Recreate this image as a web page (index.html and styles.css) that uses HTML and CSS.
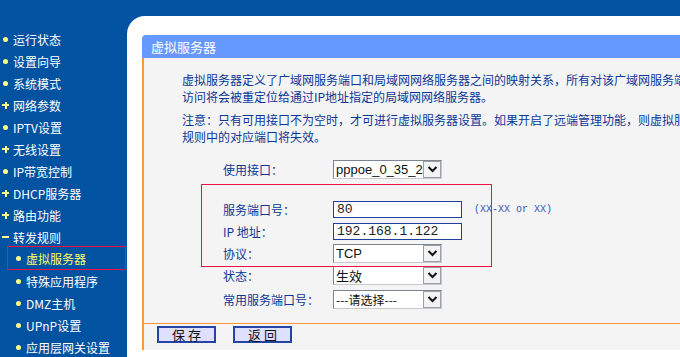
FILE: index.html
```html
<!DOCTYPE html>
<html lang="zh-CN">
<head>
    <meta charset="UTF-8">
    <title>虚拟服务器</title>
    <link rel="stylesheet" href="styles.css">
</head>
<body>
    <div class="frame">
        <nav class="menu">
            <ul>
                <li class="item dot">运行状态</li>
                <li class="item dot">设置向导</li>
                <li class="item dot">系统模式</li>
                <li class="item plus">网络参数</li>
                <li class="item dot">IPTV设置</li>
                <li class="item plus">无线设置</li>
                <li class="item dot">IP带宽控制</li>
                <li class="item plus">DHCP服务器</li>
                <li class="item plus">路由功能</li>
                <li class="item minus">转发规则</li>
                <li class="sub dot active">虚拟服务器</li>
                <li class="sub dot">特殊应用程序</li>
                <li class="sub dot">DMZ主机</li>
                <li class="sub dot">UPnP设置</li>
                <li class="sub dot">应用层网关设置</li>
            </ul>
        </nav>

        <main class="main">
            <section class="panel">
                <h2 class="panel-title">虚拟服务器</h2>
                <div class="panel-body">
                    <div class="intro">
                        <p>虚拟服务器定义了广域网服务端口和局域网网络服务器之间的映射关系，所有对该广域网服务端口的<br>访问将会被重定位给通过IP地址指定的局域网网络服务器。</p>
                        <p>注意：只有可用接口不为空时，才可进行虚拟服务器设置。如果开启了远端管理功能，则虚拟服务器<br>规则中的对应端口将失效。</p>
                    </div>

                    <div class="form">
                        <div class="row">
                            <label>使用接口：</label>
                            <div class="select">
                                <span class="value latin">pppoe_0_35_2</span>
                                <span class="arrow"><svg width="11" height="8" viewBox="0 0 11 8"><path d="M1.5 2 L5.5 6 L9.5 2" fill="none" stroke="#111" stroke-width="2"/></svg></span>
                            </div>
                        </div>
                        <div class="row gap">
                            <label>服务端口号：</label>
                            <div class="field">
                                <span class="input">80</span>
                                <span class="hint">(XX-XX or XX)</span>
                            </div>
                        </div>
                        <div class="row">
                            <label>IP 地址：</label>
                            <span class="input">192.168.1.122</span>
                        </div>
                        <div class="row">
                            <label>协议：</label>
                            <div class="select">
                                <span class="value latin">TCP</span>
                                <span class="arrow"><svg width="11" height="8" viewBox="0 0 11 8"><path d="M1.5 2 L5.5 6 L9.5 2" fill="none" stroke="#111" stroke-width="2"/></svg></span>
                            </div>
                        </div>
                        <div class="row">
                            <label>状态：</label>
                            <div class="select">
                                <span class="value">生效</span>
                                <span class="arrow"><svg width="11" height="8" viewBox="0 0 11 8"><path d="M1.5 2 L5.5 6 L9.5 2" fill="none" stroke="#111" stroke-width="2"/></svg></span>
                            </div>
                        </div>
                        <div class="row tight">
                            <label>常用服务端口号：</label>
                            <div class="select">
                                <span class="value small">---请选择---</span>
                                <span class="arrow"><svg width="11" height="8" viewBox="0 0 11 8"><path d="M1.5 2 L5.5 6 L9.5 2" fill="none" stroke="#111" stroke-width="2"/></svg></span>
                            </div>
                        </div>

                        <!-- annotation box drawn over the rows -->
                        <div class="highlight"></div>
                    </div>

                    <div class="buttons">
                        <button>保 存</button>
                        <button>返 回</button>
                    </div>
                </div>
            </section>
        </main>
    </div>
</body>
</html>
```

FILE: styles.css
```css
:root {
    --blue: #0152a1;
    --title: #6699ff;
    --panel: #f4f4f4;
    --orange: #ff9933;
    --text: #0c3797;
    --bullet: #ffff88;
}

* {
    margin: 0;
    padding: 0;
    box-sizing: border-box;
}

body {
    font-family: "Noto Sans CJK SC", "Noto Sans", sans-serif;
    font-size: 12px;
    background: var(--blue);
    overflow: hidden;
    height: 357px;
}

.frame {
    display: grid;
    grid-template-columns: 127px 1fr;
    padding-top: 16px;
    height: 357px;
}

/* left menu */

.menu {
    padding-top: 12px;
}

.menu ul {
    list-style: none;
}

.menu li {
    display: flex;
    align-items: center;
    height: 22px;
    color: #fff;
    white-space: nowrap;
}

.menu li::before {
    content: "";
    display: block;
    flex: none;
    margin-right: 4px;
}

.menu .item {
    padding-left: 2px;
}

.menu .sub {
    padding-left: 15px;
}

.menu .dot::before {
    width: 5px;
    height: 5px;
    margin-left: 1px;
    margin-right: 5px;
    border-radius: 50%;
    background: var(--bullet);
}

.menu .plus::before {
    width: 7px;
    height: 7px;
    background:
        linear-gradient(var(--bullet), var(--bullet)) center / 7px 2px no-repeat,
        linear-gradient(var(--bullet), var(--bullet)) center / 2px 7px no-repeat;
}

.menu .minus::before {
    width: 7px;
    height: 7px;
    background: linear-gradient(var(--bullet), var(--bullet)) center / 7px 2px no-repeat;
}

.menu .active {
    margin-left: 7px;
    margin-right: 1px;
    padding-left: 7px;
    height: 24px;
    margin-top: -2px;
    color: #ffff66;
    border: 1px solid #ee1144;
}

/* main panel */

.main {
    background: #fff;
    border-top-left-radius: 18px;
    padding: 19px 0 0 15px;
    overflow: hidden;
}

.panel {
    width: 720px;
}

.panel-title {
    height: 23px;
    line-height: 23px;
    padding-left: 9px;
    font-size: 13px;
    font-weight: normal;
    color: #fff;
    background: var(--title);
    border-top-left-radius: 4px;
}

.panel-body {
    height: 292px;
    background: var(--panel);
    border-left: 2px solid var(--orange);
}

.intro {
    padding: 13px 0 0 38px;
    color: var(--text);
    white-space: nowrap;
}

.intro p {
    line-height: 17px;
    margin-bottom: 6px;
}

.form {
    position: relative;
    margin-top: 13px;
    padding-left: 79px;
}

.row {
    display: grid;
    grid-template-columns: 110px auto;
    align-items: center;
    height: 22px;
}

.row.gap {
    margin-top: 18px;
}

.row.tight {
    margin-top: 2px;
}

.row label {
    color: var(--text);
}

.field {
    display: flex;
    align-items: center;
    gap: 12px;
}

.input {
    display: block;
    width: 129px;
    height: 17px;
    line-height: 15px;
    padding-left: 3px;
    border: 1px solid #1e3f9c;
    background: #fff;
    font-family: "Liberation Mono", monospace;
    font-size: 13px;
    color: #222;
}

.hint {
    font-family: "Liberation Mono", monospace;
    font-size: 10px;
    color: #3358b8;
}

.select {
    display: flex;
    width: 109px;
    height: 19px;
    border: 1px solid #7d8592;
    border-right-color: #c6c9cf;
    border-bottom-color: #c6c9cf;
    background: #fff;
}

.select .value {
    flex: 1;
    overflow: hidden;
    white-space: nowrap;
    padding-left: 2px;
    line-height: 17px;
    font-size: 13px;
    color: #111;
}

.select .value.latin {
    font-family: "Liberation Sans", sans-serif;
}

.select .value.small {
    font-size: 12px;
}

.select .arrow {
    flex: none;
    width: 18px;
    display: flex;
    align-items: center;
    justify-content: center;
    background: #f3f3f3;
    border: 1px solid #9aa0a8;
}

.highlight {
    position: absolute;
    left: 57px;
    top: 26px;
    width: 291px;
    height: 83px;
    border: 1px solid #ee1144;
}

.buttons {
    display: flex;
    gap: 17px;
    margin-top: 13px;
    padding: 2px 0 0 13px;
    border-top: 1px solid var(--orange);
}

.buttons button {
    width: 59px;
    height: 17px;
    border: 2px solid #2444a8;
    background: #dfe0ff;
    font-family: "Noto Sans CJK SC", sans-serif;
    font-size: 13px;
    line-height: 13px;
    color: #111;
}
```
